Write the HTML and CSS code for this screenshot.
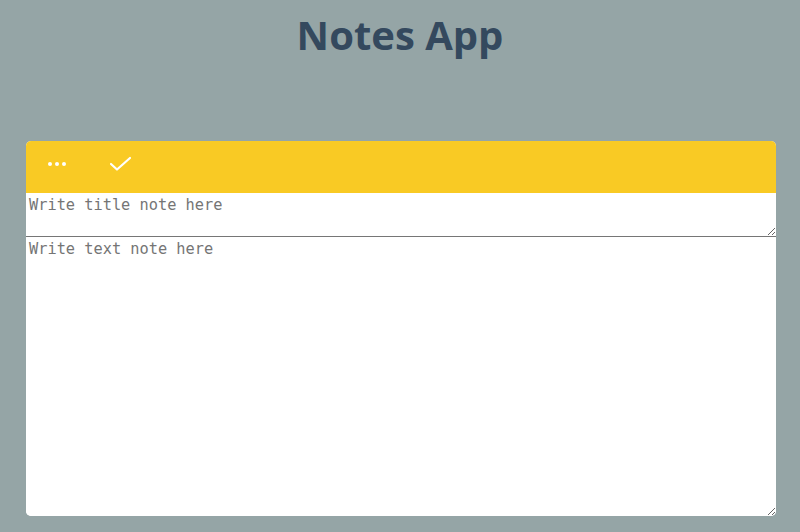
FILE: index.html
```html
<!DOCTYPE html>
<html>
<head>
<meta charset="utf-8">
<link rel="stylesheet" href="styles.css">
</head>
<body>
<h1 class="title">Notes App</h1>
<div class="note">
  <div class="note-bar">
    <button class="icon-btn" aria-label="more">
      <svg width="22" height="8" viewBox="0 0 22 8"><circle cx="4" cy="4" r="2" fill="#fff"/><circle cx="11" cy="4" r="2" fill="#fff"/><circle cx="18" cy="4" r="2" fill="#fff"/></svg>
    </button>
    <button class="icon-btn" aria-label="save">
      <svg width="24" height="16" viewBox="0 0 24 16"><path d="M2 8 L8 13.5 L21 2" fill="none" stroke="#fff" stroke-width="2.2" stroke-linecap="round" stroke-linejoin="round"/></svg>
    </button>
  </div>
  <textarea class="note-title" placeholder="Write title note here"></textarea>
  <textarea class="note-text" placeholder="Write text note here"></textarea>
</div>
</body>
</html>
```
FILE: styles.css
```css
html, body {
  margin: 0;
  padding: 0;
}
body {
  background: #95a5a6;
  font-family: "Open Sans", sans-serif;
  height: 532px;
  overflow: hidden;
}
.title {
  margin: 10px 0 0;
  text-align: center;
  font-size: 40px;
  font-weight: 700;
  color: #34495e;
  line-height: 50px;
}
.note {
  width: 750px;
  margin: 81px 0 0 26px;
  background: #fff;
  border-radius: 5px;
  overflow: hidden;
}
.note-bar {
  height: 52px;
  box-sizing: border-box;
  padding: 0 0 7px 10px;
  background: #f9ca24;
  display: flex;
  align-items: center;
  gap: 22px;
}
.icon-btn {
  width: 42px;
  height: 34px;
  border: none;
  background: transparent;
  padding: 0;
  display: flex;
  align-items: center;
  justify-content: center;
}
textarea {
  display: block;
  width: 100%;
  box-sizing: border-box;
  border: none;
  margin: 0;
  padding: 3px;
  font-family: "DejaVu Sans Mono", monospace;
  font-size: 15.3px;
  color: #333;
  outline: none;
}
textarea::placeholder {
  color: #757575;
}
.note-title {
  height: 44px;
  border-bottom: 1px solid #767676;
}
.note-text {
  height: 279px;
}
```
